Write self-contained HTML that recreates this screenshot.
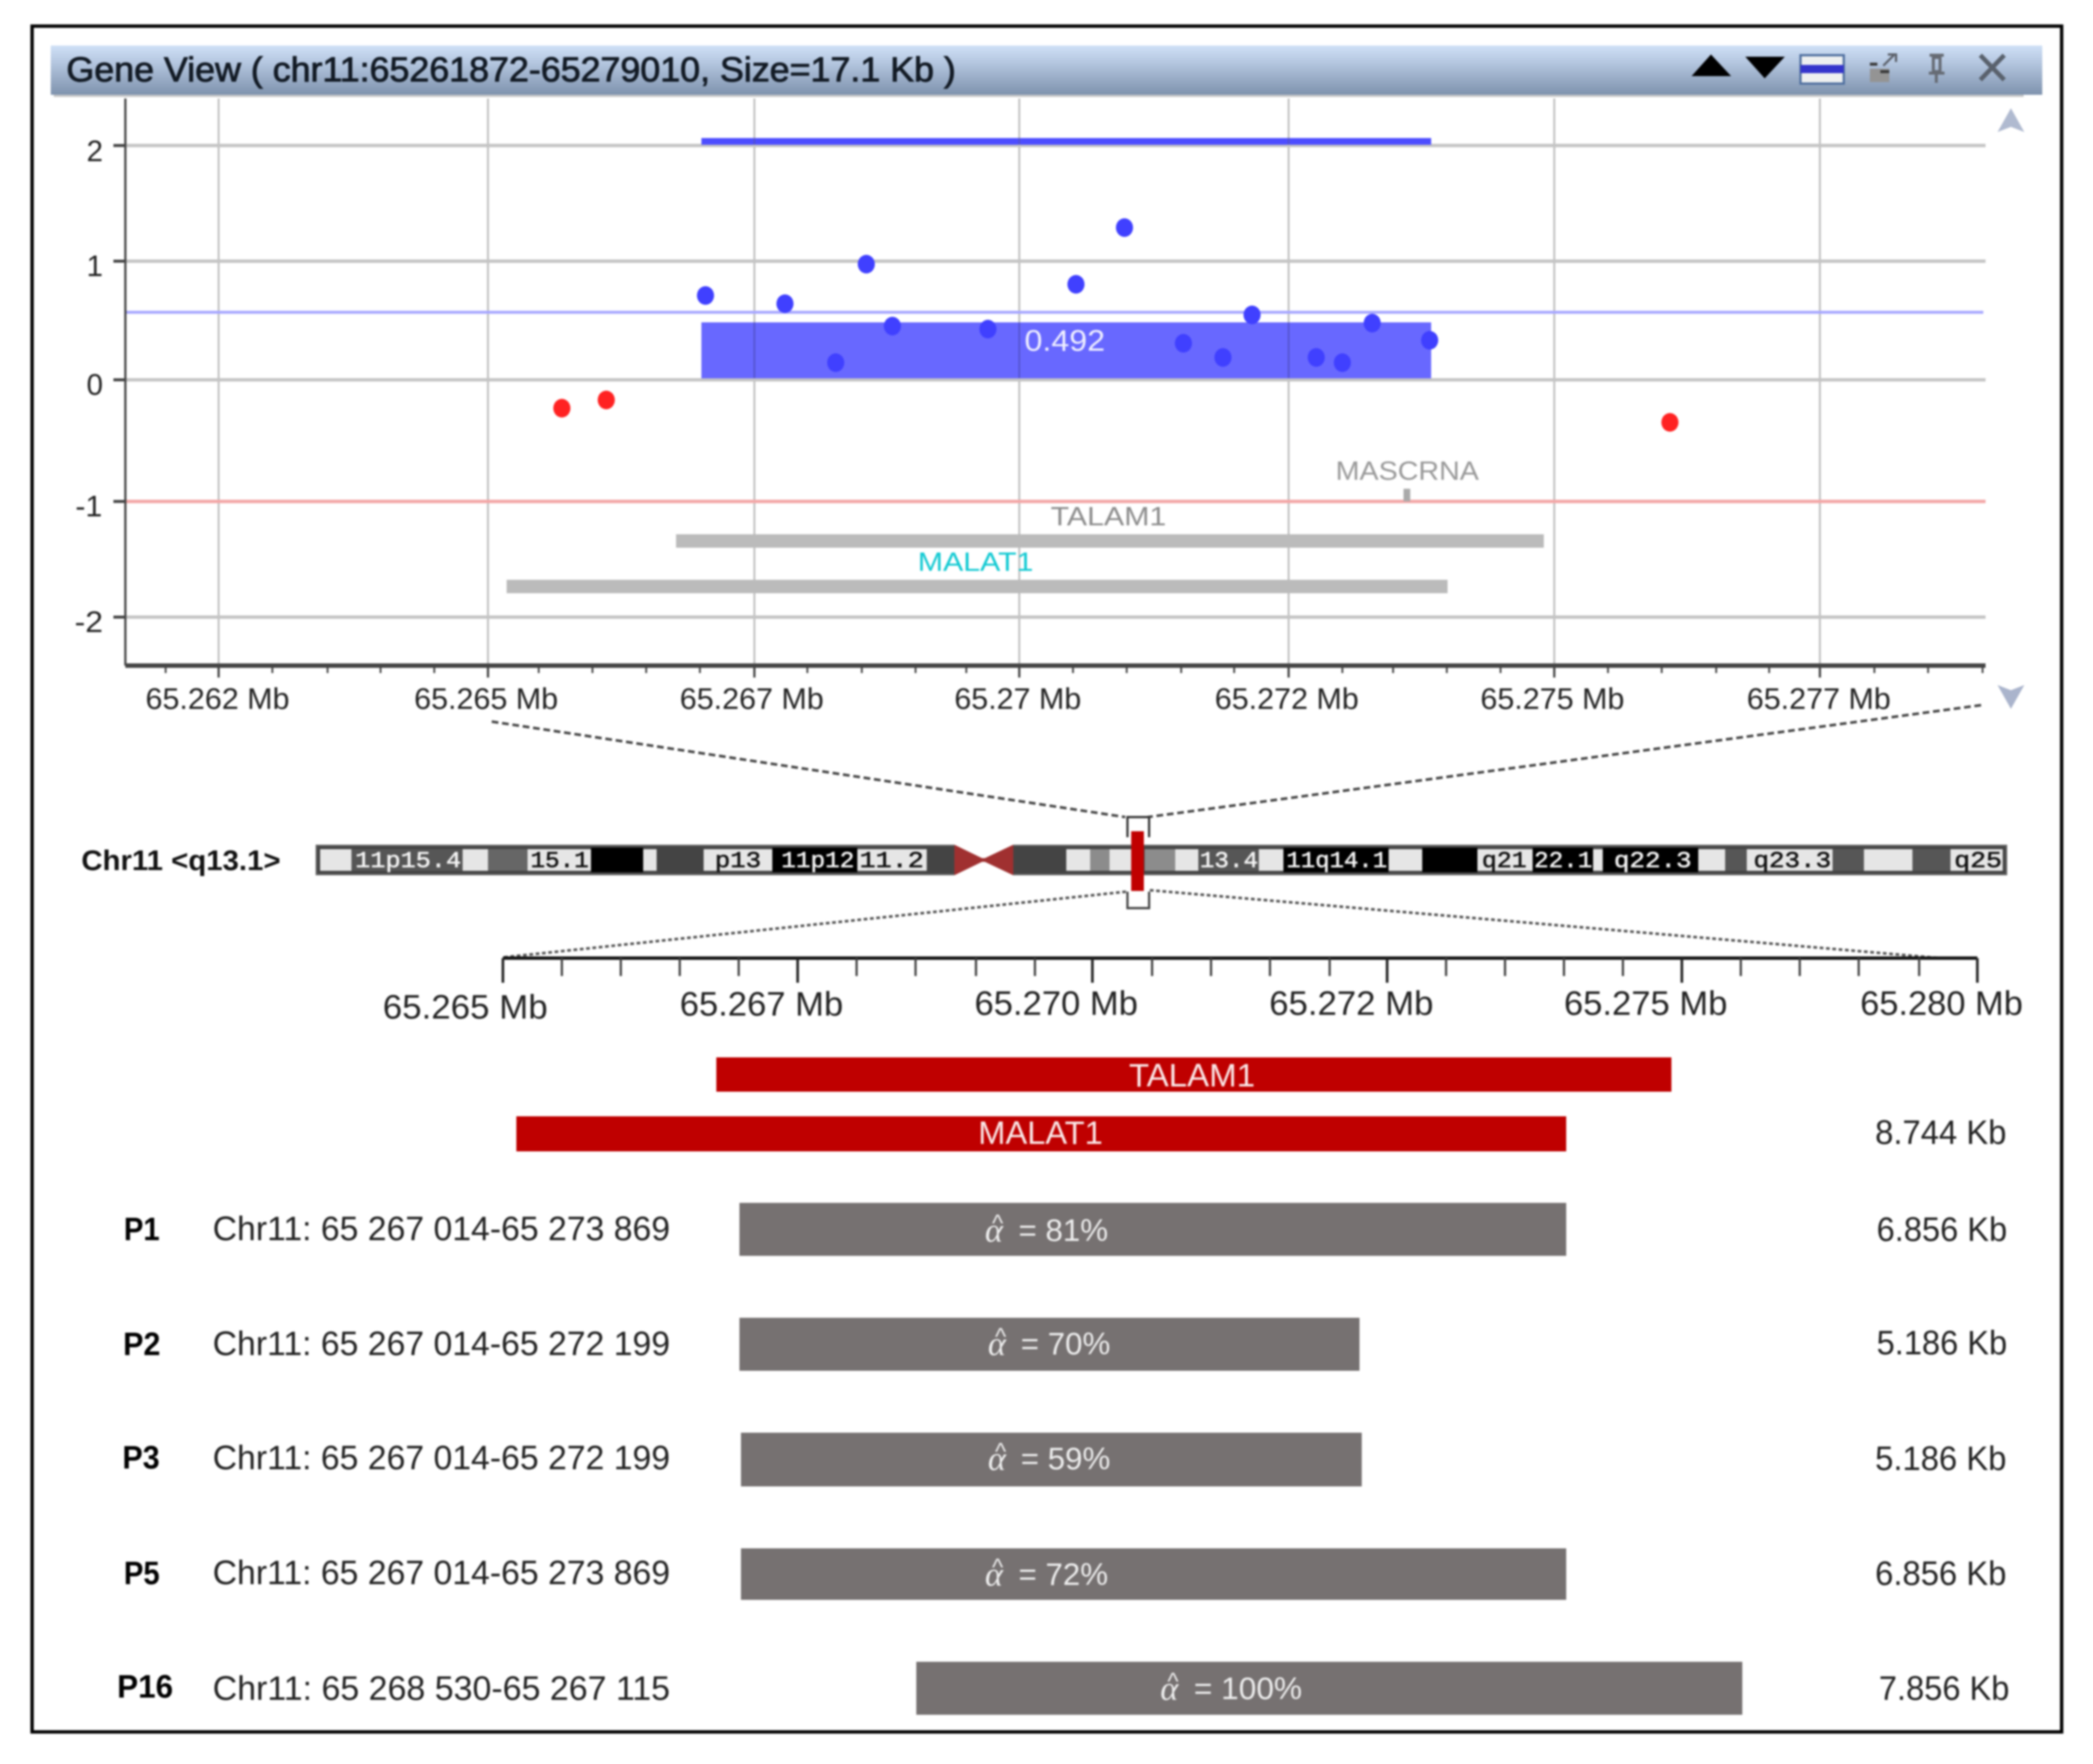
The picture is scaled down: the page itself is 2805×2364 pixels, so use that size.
<!DOCTYPE html>
<html lang="en"><head><meta charset="utf-8"><title>Gene View</title>
<style>
html,body{margin:0;padding:0;background:#fff}
svg{display:block;filter:blur(1.2px)}
text{font-family:"Liberation Sans",sans-serif}
.ax{font-size:40px;fill:#222}
.c{font-size:45px;fill:#222}
.b{font-size:44px;font-weight:bold;fill:#000}
.m{font-family:"Liberation Mono",monospace;font-size:31px;stroke-width:.7px}
.w{fill:#f4f4f4;stroke:#f4f4f4}.k{fill:#111;stroke:#111}
.a{font-size:42px;fill:#eee}
.al{font-family:"Liberation Serif",serif;font-style:italic;font-size:46px;fill:#eee}
.h{font-size:32px;fill:#eee;text-anchor:middle}
</style></head><body>
<svg xmlns="http://www.w3.org/2000/svg" width="2805" height="2364" viewBox="0 0 2805 2364">
<defs>
<linearGradient id="tb" x1="0" y1="0" x2="0" y2="1"><stop offset="0" stop-color="#cfe0f6"/><stop offset=".35" stop-color="#b4c6df"/><stop offset="1" stop-color="#7e92ad"/></linearGradient>
</defs>
<rect width="2805" height="2364" fill="#fff"/>
<rect x="43" y="35" width="2720" height="2286" fill="#fff" stroke="#000" stroke-width="4.5"/>

<!-- title bar -->
<rect x="68" y="61" width="2669" height="66" fill="url(#tb)"/>
<rect x="72" y="127" width="2640" height="3" fill="#c8c8c8"/>
<text x="89" y="109" font-size="46" fill="#121a24" textLength="1192" lengthAdjust="spacingAndGlyphs" stroke="#121a24" stroke-width="1.1">Gene View ( chr11:65261872-65279010, Size=17.1 Kb )</text>
<path d="M2267 102L2320 102L2293 73Z" fill="#000"/>
<path d="M2339 76L2392 76L2365 105Z" fill="#000"/>
<rect x="2413" y="74" width="58" height="38" fill="#eef0f0" stroke="#4f6f9f" stroke-width="3"/>
<rect x="2413" y="87" width="58" height="11" fill="#3434cc"/>
<rect x="2506" y="92" width="26" height="18" fill="#949494"/>
<rect x="2520" y="94" width="12" height="4" fill="#3a3a3a"/>
<rect x="2506" y="84" width="10" height="4" fill="#3a3a3a"/>
<path d="M2524 88L2538 74M2530 73h11v10" fill="none" stroke="#5a5f68" stroke-width="3"/>
<path d="M2586 74h19M2591 77h9v19h-9zM2585 98h21M2595 98v13" fill="none" stroke="#666b74" stroke-width="4"/>
<path d="M2654 74L2686 107M2686 74L2654 107" fill="none" stroke="#59616c" stroke-width="6"/>
<path d="M2695 145L2713 177L2695 170L2677 177Z" fill="#b0bad0"/>
<path d="M2695 950L2713 918L2695 925L2677 918Z" fill="#aab4cc"/>

<!-- grid -->
<path d="M293 132V892M654 132V892M1011 132V892M1366 132V892M1727 132V892M2083 132V892M2439 132V892" stroke="#bdbdbd" stroke-width="2.5" fill="none"/>
<path d="M168 195H2661M168 350H2661M168 509H2661M168 827H2661" stroke="#c4c4c4" stroke-width="4.5" fill="none"/>
<path d="M168 418.500H2658" stroke="#a8a8ff" stroke-width="4" fill="none"/>
<path d="M168 672H2661" stroke="#f3a6a6" stroke-width="4.500" fill="none"/>
<path d="M168 132V892" stroke="#444" stroke-width="3" fill="none"/>
<path d="M152 195h16M152 350h16M152 509h16M152 672h16M152 827h16" stroke="#444" stroke-width="4" fill="none"/>

<!-- blue -->
<rect x="940" y="185" width="978" height="9" fill="#4d4dff"/>
<rect x="940" y="432" width="978" height="75" fill="#6868ff"/>
<path d="M1011 185V194M1366 185V194M1727 185V194M1011 432V507M1366 432V507M1727 432V507" stroke="#5252c8" stroke-width="2"/>
<text x="1373" y="470" font-size="40" fill="#f0f0ff" textLength="108" lengthAdjust="spacingAndGlyphs">0.492</text>
<g fill="#4040ff">
<ellipse cx="945.500" cy="396" rx="11.500" ry="12.500"/><ellipse cx="1052" cy="407" rx="11.500" ry="12.500"/><ellipse cx="1120" cy="486" rx="11.500" ry="12.500"/><ellipse cx="1161" cy="354" rx="11.500" ry="12.500"/><ellipse cx="1196" cy="437" rx="11.500" ry="12.500"/><ellipse cx="1324" cy="441" rx="11.500" ry="12.500"/><ellipse cx="1442" cy="381" rx="11.500" ry="12.500"/><ellipse cx="1507" cy="305" rx="11.500" ry="12.500"/><ellipse cx="1586" cy="460" rx="11.500" ry="12.500"/><ellipse cx="1639" cy="479" rx="11.500" ry="12.500"/><ellipse cx="1678" cy="422" rx="11.500" ry="12.500"/><ellipse cx="1764" cy="479" rx="11.500" ry="12.500"/><ellipse cx="1799" cy="486" rx="11.500" ry="12.500"/><ellipse cx="1839" cy="433" rx="11.500" ry="12.500"/><ellipse cx="1916" cy="456" rx="11.500" ry="12.500"/>
</g>
<g fill="#ff2222"><ellipse cx="753" cy="547" rx="11.500" ry="12.500"/><ellipse cx="812.500" cy="536" rx="11.500" ry="12.500"/><ellipse cx="2238" cy="566" rx="11.500" ry="12.500"/></g>

<!-- y labels -->
<text class="ax" x="116" y="216" textLength="22" lengthAdjust="spacingAndGlyphs">2</text>
<text class="ax" x="116" y="370" textLength="22" lengthAdjust="spacingAndGlyphs">1</text>
<text class="ax" x="116" y="529" textLength="22" lengthAdjust="spacingAndGlyphs">0</text>
<text class="ax" x="101" y="692" textLength="36" lengthAdjust="spacingAndGlyphs">-1</text>
<text class="ax" x="100" y="847" textLength="38" lengthAdjust="spacingAndGlyphs">-2</text>

<!-- gene tracks -->
<text x="1790" y="643" font-size="35" fill="#999" textLength="192" lengthAdjust="spacingAndGlyphs">MASCRNA</text>
<rect x="1881" y="655" width="9" height="17" fill="#aaa"/>
<text x="1408" y="704" font-size="35" fill="#8c8c8c" textLength="155" lengthAdjust="spacingAndGlyphs">TALAM1</text>
<rect x="906" y="716" width="1163" height="18" fill="#bbb"/>
<text x="1230" y="765" font-size="35" fill="#10c9d2" textLength="155" lengthAdjust="spacingAndGlyphs">MALAT1</text>
<rect x="679" y="777" width="1261" height="18" fill="#bbb"/>

<!-- x axis -->
<path d="M168 892H2661" stroke="#444" stroke-width="6" fill="none"/>
<path d="M293 892V908M654 892V908M1011 892V908M1366 892V908M1727 892V908M2083 892V908M2439 892V908" stroke="#444" stroke-width="3" fill="none"/>
<path d="M222 892V902M365 892V902M439 892V902M510 892V902M582 892V902M722 892V902M794 892V902M866 892V902M938 892V902M1082 892V902M1155 892V902M1227 892V902M1295 892V902M1438 892V902M1510 892V902M1583 892V902M1654 892V902M1799 892V902M1867 892V902M1939 892V902M2011 892V902M2155 892V902M2227 892V902M2300 892V902M2371 892V902M2512 892V902M2584 892V902M2657 892V902" stroke="#444" stroke-width="2.500" fill="none"/>
<text class="ax" x="195" y="950" textLength="193" lengthAdjust="spacingAndGlyphs">65.262 Mb</text>
<text class="ax" x="555" y="950" textLength="193" lengthAdjust="spacingAndGlyphs">65.265 Mb</text>
<text class="ax" x="911" y="950" textLength="193" lengthAdjust="spacingAndGlyphs">65.267 Mb</text>
<text class="ax" x="1279" y="950" textLength="170" lengthAdjust="spacingAndGlyphs">65.27 Mb</text>
<text class="ax" x="1628" y="950" textLength="193" lengthAdjust="spacingAndGlyphs">65.272 Mb</text>
<text class="ax" x="1984" y="950" textLength="193" lengthAdjust="spacingAndGlyphs">65.275 Mb</text>
<text class="ax" x="2341" y="950" textLength="193" lengthAdjust="spacingAndGlyphs">65.277 Mb</text>

<!-- dashed zoom lines -->
<path d="M659 967L1508 1095M2655 945L1538 1095" fill="none" stroke="#444" stroke-width="3.500" stroke-dasharray="9 5"/>
<path d="M1509 1195L674 1283M1541 1193L2600 1284" fill="none" stroke="#555" stroke-width="3.500" stroke-dasharray="5 3.500"/>

<!-- chromosome -->
<text x="109" y="1166" font-size="38" font-weight="bold" fill="#111" textLength="267" lengthAdjust="spacingAndGlyphs">Chr11 &lt;q13.1&gt;</text>
<rect x="424" y="1133" width="2265" height="39" fill="#444" stroke="#666" stroke-width="2"/>
<g fill="#e6e6e6">
<rect x="429" y="1138" width="42" height="29"/><rect x="620" y="1138" width="34" height="29"/><rect x="707" y="1138" width="85" height="29"/><rect x="862" y="1138" width="18" height="29"/><rect x="943" y="1138" width="92" height="29"/><rect x="1149" y="1138" width="93" height="29"/><rect x="1429" y="1138" width="32" height="29"/><rect x="1487" y="1138" width="31" height="29"/><rect x="1575" y="1138" width="31" height="29"/><rect x="1687" y="1138" width="33" height="29"/><rect x="1861" y="1138" width="45" height="29"/><rect x="1980" y="1138" width="74" height="29"/><rect x="2135" y="1138" width="13" height="29"/><rect x="2276" y="1138" width="36" height="29"/><rect x="2341" y="1138" width="115" height="29"/><rect x="2498" y="1138" width="65" height="29"/><rect x="2614" y="1138" width="70" height="29"/>
</g>
<g fill="#565656"><rect x="471" y="1138" width="149" height="29"/><rect x="654" y="1138" width="53" height="29" fill="#666"/><rect x="880" y="1138" width="63" height="29" fill="#444"/><rect x="1606" y="1138" width="81" height="29"/><rect x="2312" y="1138" width="29" height="29"/><rect x="2456" y="1138" width="42" height="29"/><rect x="2563" y="1138" width="51" height="29"/></g>
<g fill="#8c8c8c"><rect x="1461" y="1138" width="26" height="29"/><rect x="1534" y="1138" width="41" height="29"/></g>
<g fill="#000"><rect x="792" y="1136" width="70" height="33"/><rect x="1035" y="1136" width="114" height="33"/><rect x="1720" y="1136" width="141" height="33"/><rect x="1906" y="1136" width="74" height="33"/><rect x="2054" y="1136" width="81" height="33"/><rect x="2148" y="1136" width="128" height="33"/></g>
<rect x="1279" y="1128" width="79" height="48" fill="#fff"/>
<path d="M1279 1132L1316 1150H1320L1358 1132V1173L1320 1155H1316L1279 1173Z" fill="#a03030"/>
<text class="m w" x="476" y="1162" textLength="142" lengthAdjust="spacingAndGlyphs">11p15.4</text>
<text class="m k" x="711" y="1162" textLength="78" lengthAdjust="spacingAndGlyphs">15.1</text>
<text class="m k" x="958" y="1162" textLength="62" lengthAdjust="spacingAndGlyphs">p13</text>
<text class="m w" x="1047" y="1162" textLength="98" lengthAdjust="spacingAndGlyphs">11p12</text>
<text class="m k" x="1152" y="1162" textLength="86" lengthAdjust="spacingAndGlyphs">11.2</text>
<text class="m w" x="1608" y="1162" textLength="78" lengthAdjust="spacingAndGlyphs">13.4</text>
<text class="m w" x="1724" y="1162" textLength="135" lengthAdjust="spacingAndGlyphs">11q14.1</text>
<text class="m k" x="1986" y="1162" textLength="60" lengthAdjust="spacingAndGlyphs">q21</text>
<text class="m w" x="2056" y="1162" textLength="78" lengthAdjust="spacingAndGlyphs">22.1</text>
<text class="m w" x="2163" y="1162" textLength="104" lengthAdjust="spacingAndGlyphs">q22.3</text>
<text class="m k" x="2350" y="1162" textLength="104" lengthAdjust="spacingAndGlyphs">q23.3</text>
<text class="m k" x="2619" y="1162" textLength="64" lengthAdjust="spacingAndGlyphs">q25</text>
<path d="M1511 1122V1095H1540V1122" fill="none" stroke="#333" stroke-width="3"/>
<path d="M1511 1195V1217H1540V1195" fill="none" stroke="#444" stroke-width="3"/>
<rect x="1516" y="1114" width="17" height="80" fill="#c00000"/>

<!-- lower scale -->
<path d="M674 1284H2650" stroke="#111" stroke-width="4.500" fill="none"/>
<path d="M674 1284V1317M1069 1284V1317M1464 1284V1317M1859 1284V1317M2254 1284V1317M2650 1284V1317" stroke="#222" stroke-width="3.500" fill="none"/>
<path d="M753 1284V1308M832 1284V1308M911 1284V1308M990 1284V1308M1148 1284V1308M1227 1284V1308M1308 1284V1308M1387 1284V1308M1544 1284V1308M1623 1284V1308M1702 1284V1308M1782 1284V1308M1938 1284V1308M2017 1284V1308M2096 1284V1308M2175 1284V1308M2333 1284V1308M2412 1284V1308M2491 1284V1308M2572 1284V1308" stroke="#444" stroke-width="3" fill="none"/>
<text class="c" x="513" y="1365" textLength="221" lengthAdjust="spacingAndGlyphs">65.265 Mb</text>
<text class="c" x="911" y="1361" textLength="219" lengthAdjust="spacingAndGlyphs">65.267 Mb</text>
<text class="c" x="1306" y="1360" textLength="219" lengthAdjust="spacingAndGlyphs">65.270 Mb</text>
<text class="c" x="1701" y="1360" textLength="220" lengthAdjust="spacingAndGlyphs">65.272 Mb</text>
<text class="c" x="2096" y="1360" textLength="219" lengthAdjust="spacingAndGlyphs">65.275 Mb</text>
<text class="c" x="2493" y="1360" textLength="218" lengthAdjust="spacingAndGlyphs">65.280 Mb</text>

<!-- red genes -->
<rect x="960" y="1417" width="1280" height="46" fill="#bf0000"/>
<rect x="692" y="1496" width="1407" height="47" fill="#bf0000"/>
<text x="1513" y="1456" font-size="44" fill="#fbe9e9" textLength="169" lengthAdjust="spacingAndGlyphs">TALAM1</text>
<text x="1311" y="1533" font-size="44" fill="#fbe9e9" textLength="167" lengthAdjust="spacingAndGlyphs">MALAT1</text>
<text class="c" x="2513" y="1533" textLength="176" lengthAdjust="spacingAndGlyphs">8.744 Kb</text>

<!-- probes -->
<g fill="#767171">
<rect x="991" y="1612" width="1108" height="71"/>
<rect x="991" y="1766" width="831" height="71"/>
<rect x="993" y="1920" width="832" height="72"/>
<rect x="993" y="2075" width="1106" height="69"/>
<rect x="1228" y="2227" width="1107" height="71"/>
</g>
<text class="b" x="166" y="1662" textLength="48" lengthAdjust="spacingAndGlyphs">P1</text>
<text class="b" x="165" y="1816" textLength="50" lengthAdjust="spacingAndGlyphs">P2</text>
<text class="b" x="164" y="1968" textLength="50" lengthAdjust="spacingAndGlyphs">P3</text>
<text class="b" x="166" y="2123" textLength="48" lengthAdjust="spacingAndGlyphs">P5</text>
<text class="b" x="157" y="2275" textLength="75" lengthAdjust="spacingAndGlyphs">P16</text>
<text class="c" x="285" y="1662" textLength="613" lengthAdjust="spacingAndGlyphs">Chr11: 65 267 014-65 273 869</text>
<text class="c" x="285" y="1816" textLength="613" lengthAdjust="spacingAndGlyphs">Chr11: 65 267 014-65 272 199</text>
<text class="c" x="285" y="1969" textLength="613" lengthAdjust="spacingAndGlyphs">Chr11: 65 267 014-65 272 199</text>
<text class="c" x="285" y="2123" textLength="613" lengthAdjust="spacingAndGlyphs">Chr11: 65 267 014-65 273 869</text>
<text class="c" x="285" y="2278" textLength="613" lengthAdjust="spacingAndGlyphs">Chr11: 65 268 530-65 267 115</text>

<text class="al" x="1320" y="1664">α</text><text class="h" x="1337" y="1650">^</text><text class="a" x="1365" y="1663" textLength="120" lengthAdjust="spacingAndGlyphs">= 81%</text>
<text class="al" x="1324" y="1816">α</text><text class="h" x="1341" y="1802">^</text><text class="a" x="1368" y="1815" textLength="120" lengthAdjust="spacingAndGlyphs">= 70%</text>
<text class="al" x="1324" y="1970">α</text><text class="h" x="1341" y="1956">^</text><text class="a" x="1368" y="1969" textLength="120" lengthAdjust="spacingAndGlyphs">= 59%</text>
<text class="al" x="1320" y="2125">α</text><text class="h" x="1337" y="2111">^</text><text class="a" x="1365" y="2124" textLength="120" lengthAdjust="spacingAndGlyphs">= 72%</text>
<text class="al" x="1555" y="2278">α</text><text class="h" x="1572" y="2264">^</text><text class="a" x="1600" y="2277" textLength="145" lengthAdjust="spacingAndGlyphs">= 100%</text>

<text class="c" x="2515" y="1663" textLength="175" lengthAdjust="spacingAndGlyphs">6.856 Kb</text>
<text class="c" x="2515" y="1815" textLength="175" lengthAdjust="spacingAndGlyphs">5.186 Kb</text>
<text class="c" x="2513" y="1970" textLength="176" lengthAdjust="spacingAndGlyphs">5.186 Kb</text>
<text class="c" x="2513" y="2124" textLength="176" lengthAdjust="spacingAndGlyphs">6.856 Kb</text>
<text class="c" x="2518" y="2278" textLength="175" lengthAdjust="spacingAndGlyphs">7.856 Kb</text>
</svg>
</body></html>
